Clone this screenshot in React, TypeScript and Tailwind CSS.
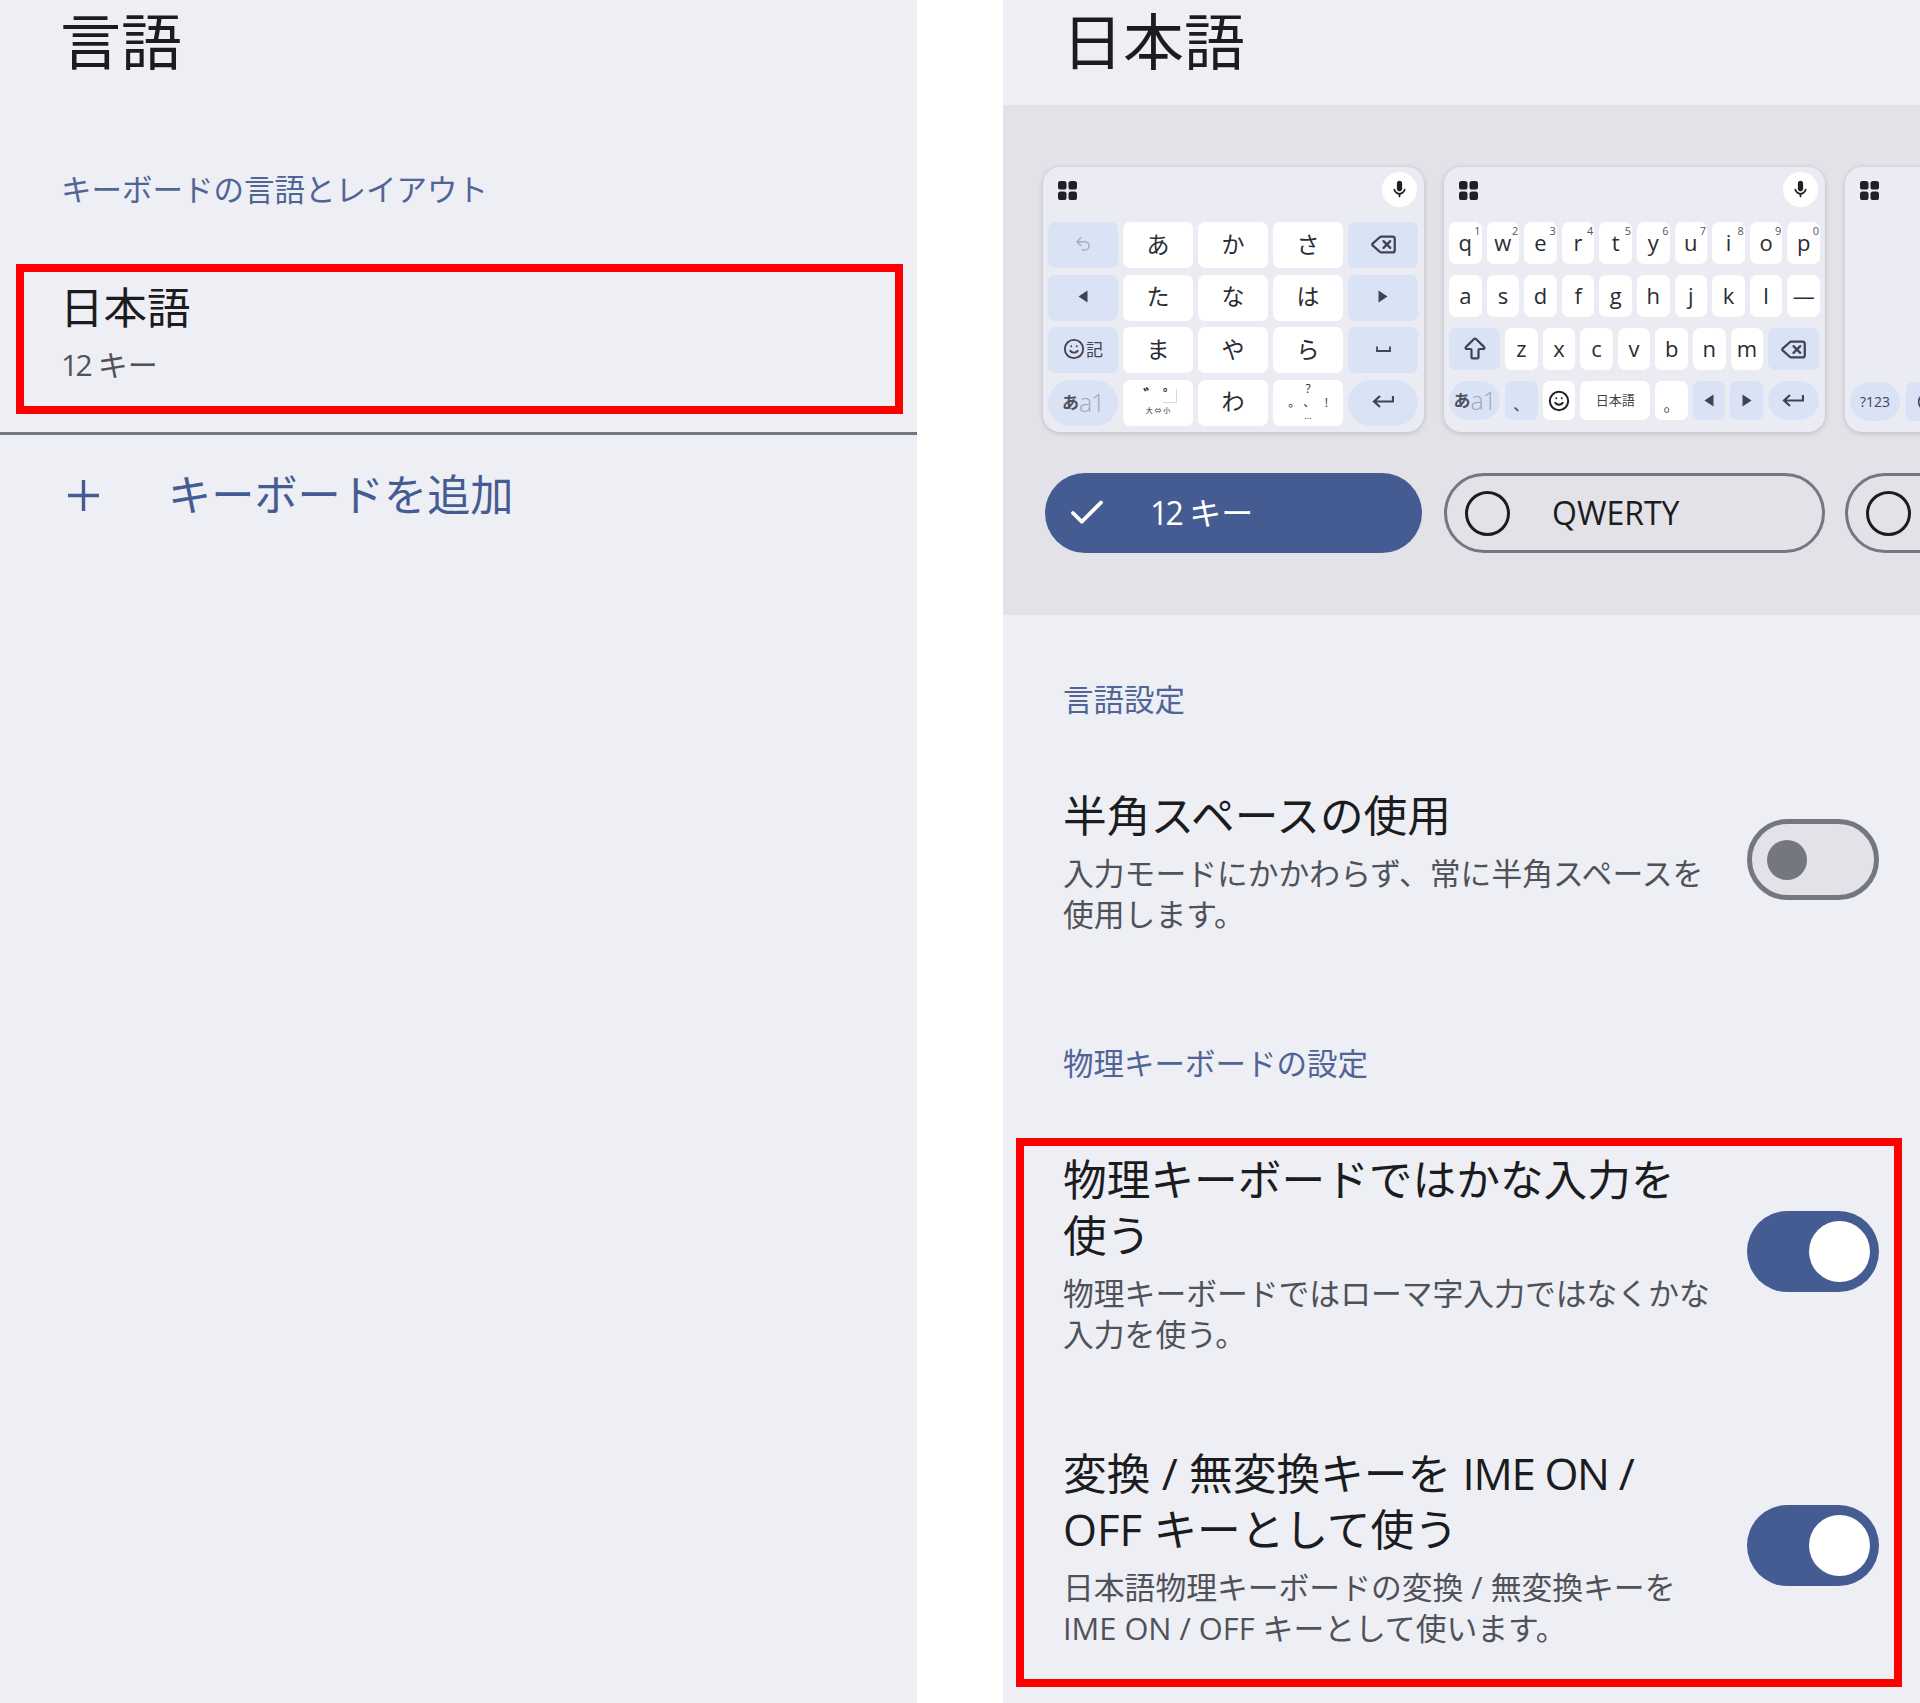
import { ArrowBigUp, Check, Delete, Smile, Undo2 } from 'lucide-react';
import type { ReactNode } from 'react';

const MIC =
  'M12 14c1.66 0 3-1.34 3-3V5c0-1.66-1.34-3-3-3S9 3.34 9 5v6c0 1.66 1.34 3 3 3zm5.91-3c-.49 0-.9.36-.98.85C16.52 14.2 14.47 16 12 16s-4.52-1.8-4.93-4.15c-.08-.49-.49-.85-.98-.85-.61 0-1.09.54-1 1.14.49 3 2.89 5.35 5.91 5.78V20c0 .55.45 1 1 1s1-.45 1-1v-2.08c3.02-.43 5.42-2.78 5.91-5.78.1-.6-.39-1.14-1-1.14z';

function GridIcon() {
  return (
    <svg width="19" height="19" viewBox="0 0 19 19" fill="#1f2126">
      <rect x="0" y="0" width="8.5" height="8.5" rx="2.6" />
      <rect x="10.5" y="0" width="8.5" height="8.5" rx="2.6" />
      <rect x="0" y="10.5" width="8.5" height="8.5" rx="2.6" />
      <rect x="10.5" y="10.5" width="8.5" height="8.5" rx="2.6" />
    </svg>
  );
}

function Triangle({ dir }: { dir: 'left' | 'right' }) {
  return (
    <svg width="10" height="13" viewBox="0 0 10 13" fill="#3f4450">
      <path d={dir === 'left' ? 'M9.5 0.5v12L0.5 6.5z' : 'M0.5 0.5v12l9-6z'} />
    </svg>
  );
}

function Enter() {
  return (
    <svg width="22" height="16" viewBox="0 0 22 16" fill="none" stroke="#3f4450" strokeWidth="2.2">
      <path d="M21 2v5.5H2.5M8 2 2 7.5 8 13" />
    </svg>
  );
}

function SpaceGlyph() {
  return (
    <svg width="15" height="7" viewBox="0 0 15 7" fill="none" stroke="#3f4450" strokeWidth="1.8">
      <path d="M1 0.5v4.5h13V0.5" />
    </svg>
  );
}

function ModeKey({ w = 'w-[70px]', h = 'h-[46px]' }: { w?: string; h?: string }) {
  return (
    <div className={`${w} ${h} flex items-center justify-center rounded-[23px] bg-[#dae2f6] leading-none`}>
      <span className="text-[17px] font-bold text-[#4d505a]">あ</span>
      <span className="text-[25px] font-light tracking-[-0.05em] text-[#a3a8b6]">a1</span>
    </div>
  );
}

function Key12({ fn, pill, children }: { fn?: boolean; pill?: boolean; children: ReactNode }) {
  return (
    <div
      className={`flex h-[46px] w-[70px] items-center justify-center pb-[2px] text-[23px] leading-none text-[#2a2c31] ${
        fn ? 'bg-[#dae2f6]' : 'bg-white'
      } ${pill ? 'rounded-[23px]' : 'rounded-[7px]'}`}
    >
      {children}
    </div>
  );
}

function LetterKey({ ch, num }: { ch: string; num?: string }) {
  return (
    <div className="relative flex h-[42px] w-[32.6px] items-center justify-center rounded-[7px] bg-white pb-[2px] text-[22px] leading-none text-[#2a2c31]">
      {ch}
      {num && <span className="absolute right-[1px] top-[3px] text-[11px] leading-none text-[#55585f]">{num}</span>}
    </div>
  );
}

function Card({ children }: { children?: ReactNode }) {
  return (
    <div className="h-[265px] w-[381px] shrink-0 rounded-[17px] bg-[#ebecf3] px-[5px] shadow-[0_1px_5px_rgba(40,44,60,0.22)]">
      {children}
    </div>
  );
}

function TopBar({ mic = true }: { mic?: boolean }) {
  return (
    <div className="mb-[14px] flex h-[41px] items-end justify-between pl-[10px] pr-[2px]">
      <div className="mb-[8px]">
        <GridIcon />
      </div>
      {mic && (
        <div className="mb-[1px] flex h-[35px] w-[35px] items-center justify-center rounded-full bg-white">
          <svg width="21" height="21" viewBox="0 0 24 24" fill="#1f2126">
            <path d={MIC} />
          </svg>
        </div>
      )}
    </div>
  );
}

function TwelveKeyCard() {
  return (
    <Card>
      <TopBar />
      <div className="flex flex-col gap-[6.5px]">
        <div className="flex gap-[5px]">
          <Key12 fn>
            <Undo2 size={18} color="#a9aebb" strokeWidth={2} />
          </Key12>
          <Key12>あ</Key12>
          <Key12>か</Key12>
          <Key12>さ</Key12>
          <Key12 fn>
            <Delete size={27} color="#3f4450" strokeWidth={2} />
          </Key12>
        </div>
        <div className="flex gap-[5px]">
          <Key12 fn>
            <Triangle dir="left" />
          </Key12>
          <Key12>た</Key12>
          <Key12>な</Key12>
          <Key12>は</Key12>
          <Key12 fn>
            <Triangle dir="right" />
          </Key12>
        </div>
        <div className="flex gap-[5px]">
          <Key12 fn>
            <Smile size={22} color="#3f4450" strokeWidth={2} />
            <span className="ml-[1px] text-[17px] text-[#3f4450]">記</span>
          </Key12>
          <Key12>ま</Key12>
          <Key12>や</Key12>
          <Key12>ら</Key12>
          <Key12 fn>
            <SpaceGlyph />
          </Key12>
        </div>
        <div className="flex gap-[5px]">
          <ModeKey />
          <Key12>
            <div className="flex flex-col items-center text-[#2a2c31]">
              <div className="flex h-[15px] items-start gap-[2px] pl-[4px]">
                <span className="text-[18px] font-bold leading-[15px]">゛</span>
                <span className="h-[14px] w-[14px] border-b border-r border-[#d8dbe3] text-[15px] font-bold leading-[12px]">
                  ゜
                </span>
              </div>
              <span className="mt-[3px] text-[7px] leading-[8px]">大 ⇔ 小</span>
            </div>
          </Key12>
          <Key12>わ</Key12>
          <Key12>
            <div className="flex flex-col items-center text-[#2a2c31]">
              <span className="text-[12px] leading-[13px]">?</span>
              <span className="whitespace-pre text-[12px] leading-[16px]">。 、   !</span>
              <span className="text-[9px] leading-[10px]">…</span>
            </div>
          </Key12>
          <Key12 fn pill>
            <Enter />
          </Key12>
        </div>
      </div>
    </Card>
  );
}

const ROW1 = [
  ['q', '1'],
  ['w', '2'],
  ['e', '3'],
  ['r', '4'],
  ['t', '5'],
  ['y', '6'],
  ['u', '7'],
  ['i', '8'],
  ['o', '9'],
  ['p', '0'],
];

function FnKey({ w, children, white }: { w: string; children: ReactNode; white?: boolean }) {
  return (
    <div
      className={`${w} flex h-[39px] items-center justify-center rounded-[7px] text-[#3f4450] ${
        white ? 'bg-white' : 'bg-[#dae2f6]'
      }`}
    >
      {children}
    </div>
  );
}

function QwertyCard() {
  return (
    <Card>
      <TopBar />
      <div className="flex flex-col gap-[11px]">
        <div className="flex gap-[5px]">
          {ROW1.map(([c, n]) => (
            <LetterKey key={c} ch={c} num={n} />
          ))}
        </div>
        <div className="flex gap-[5px]">
          {['a', 's', 'd', 'f', 'g', 'h', 'j', 'k', 'l', '—'].map((c) => (
            <LetterKey key={c} ch={c} />
          ))}
        </div>
        <div className="flex gap-[5px]">
          <div className="flex h-[42px] w-[51px] items-center justify-center rounded-[7px] bg-[#dae2f6]">
            <ArrowBigUp size={28} color="#3f4450" strokeWidth={1.9} />
          </div>
          {['z', 'x', 'c', 'v', 'b', 'n', 'm'].map((c) => (
            <LetterKey key={c} ch={c} />
          ))}
          <div className="flex h-[42px] w-[51px] items-center justify-center rounded-[7px] bg-[#dae2f6]">
            <Delete size={27} color="#3f4450" strokeWidth={2} />
          </div>
        </div>
        <div className="flex gap-[5px]">
          <ModeKey w="w-[51px]" h="h-[39px]" />
          <FnKey w="w-[32.6px]">
            <span className="mt-[6px] text-[16px] leading-none">、</span>
          </FnKey>
          <FnKey w="w-[32.6px]" white>
            <Smile size={22} color="#1f2126" strokeWidth={2.2} />
          </FnKey>
          <FnKey w="w-[70px]" white>
            <span className="text-[13px]">日本語</span>
          </FnKey>
          <FnKey w="w-[32.6px]" white>
            <span className="mt-[8px] text-[16px] leading-none">。</span>
          </FnKey>
          <FnKey w="w-[32.6px]">
            <Triangle dir="left" />
          </FnKey>
          <FnKey w="w-[32.6px]">
            <Triangle dir="right" />
          </FnKey>
          <div className="flex h-[39px] w-[51px] items-center justify-center rounded-[20px] bg-[#dae2f6]">
            <Enter />
          </div>
        </div>
      </div>
    </Card>
  );
}

function ThirdCard() {
  return (
    <Card>
      <TopBar mic={false} />
      <div className="mt-[174px] flex gap-[6px]">
        <div className="flex h-[39px] w-[50px] items-center justify-center rounded-[20px] bg-[#dae2f6] text-[14px] text-[#3f4450]">
          ?123
        </div>
        <div className="flex h-[39px] w-[42px] shrink-0 items-center justify-center rounded-[7px] bg-[#dae2f6]">
          <Smile size={20} color="#3f4450" />
        </div>
      </div>
    </Card>
  );
}

function Toggle({ on }: { on: boolean }) {
  if (on) {
    return (
      <div className="-mt-[4px] flex h-[81px] w-[132px] shrink-0 items-center justify-end rounded-full bg-[#455c92] pr-[9px]">
        <div className="h-[61px] w-[61px] rounded-full bg-white" />
      </div>
    );
  }
  return (
    <div className="-mt-[3px] flex h-[81px] w-[132px] shrink-0 items-center rounded-full border-[5px] border-[#74777f] bg-[#e2e2e8] pl-[15px]">
      <div className="h-[40px] w-[40px] rounded-full bg-[#74777f]" />
    </div>
  );
}

function SettingRow({
  title,
  desc,
  on,
  className,
}: {
  title: ReactNode;
  desc: ReactNode;
  on: boolean;
  className?: string;
}) {
  return (
    <div className={`flex items-center justify-between ${className ?? ''}`}>
      <div>
        <div className="text-[43.7px] leading-[56px] text-[#1b1c20]">{title}</div>
        <div className="mt-[10px] text-[30.8px] leading-[41px] text-[#505259]">{desc}</div>
      </div>
      <Toggle on={on} />
    </div>
  );
}

export default function App() {
  return (
    <div className="flex h-[1703px] w-[1920px] overflow-hidden bg-white font-['Open_Sans','Noto_Sans_CJK_JP',sans-serif]">
      {/* left screen */}
      <div className="h-full w-[917px] shrink-0 bg-[#eeeef5]">
        <div className="h-[86px] pl-[60px] text-[61px] leading-[84px] text-[#1b1c20]">言語</div>
        <div className="mt-[83px] pl-[61px] text-[30.5px] leading-[40px] text-[#4f6596]">
          キーボードの言語とレイアウト
        </div>
        <div className="ml-[16px] mt-[55px] h-[150px] w-[887px] border-8 border-[#fe0000] pl-[36px] pt-[8px]">
          <div className="text-[43.5px] leading-[56px] text-[#1b1c20]">日本語</div>
          <div className="mt-[9px] pl-[1px] text-[30px] leading-[40px] text-[#505259]">
            <span className="tracking-[-0.09em]">12</span> キー
          </div>
        </div>
        <div className="mt-[18px] h-[3px] w-full bg-[#74777f]" />
        <div className="mt-[27px] flex h-[66px] items-center text-[43.2px] text-[#455c92]">
          <div className="ml-[68px] w-[100px]">
            <svg width="31" height="31" viewBox="0 0 31 31" fill="none" stroke="#455c92" strokeWidth="3.4">
              <path d="M15.5 0v31M0 15.5h31" />
            </svg>
          </div>
          キーボードを追加
        </div>
      </div>

      {/* right screen */}
      <div className="ml-[86px] h-full w-[917px] shrink-0 overflow-hidden bg-[#eeeef5]">
        <div className="h-[105px] pl-[59px] text-[61px] leading-[84px] text-[#1b1c20]">日本語</div>
        <div className="h-[510px] overflow-hidden bg-[#e2e2e8] pl-[40px] pt-[62px]">
          <div className="flex gap-5">
            <TwelveKeyCard />
            <QwertyCard />
            <ThirdCard />
          </div>
          <div className="mt-[41px] flex gap-5">
            <div className="mx-[2px] flex h-[80px] w-[377px] shrink-0 items-center rounded-full bg-[#455c92] pl-[21px] text-[32px] text-white">
              <Check size={42} color="white" strokeWidth={2.2} />
              <span className="ml-[42px]">
                <span className="tracking-[-0.09em]">12</span> キー
              </span>
            </div>
            <div className="flex h-[80px] w-[381px] shrink-0 items-center rounded-full border-[3px] border-[#74777f] pl-[18px] text-[32px] text-[#1b1c20]">
              <div className="h-[45px] w-[45px] rounded-full border-[3px] border-[#1b1c20]" />
              <span className="ml-[42px]">QWERTY</span>
            </div>
            <div className="flex h-[80px] w-[381px] shrink-0 items-center rounded-full border-[3px] border-[#74777f] pl-[18px]">
              <div className="h-[45px] w-[45px] rounded-full border-[3px] border-[#1b1c20]" />
            </div>
          </div>
        </div>

        <div className="mt-[64px] pl-[60px] text-[30.5px] leading-[40px] text-[#4f6596]">言語設定</div>
        <SettingRow
          className="mt-[68px] pl-[60px] pr-[41px]"
          title="半角スペースの使用"
          desc={
            <>
              入力モードにかかわらず、常に半角スペースを
              <br />
              使用します。
            </>
          }
          on={false}
        />
        <div className="mt-[108px] pl-[60px] text-[30.5px] leading-[40px] text-[#4f6596]">物理キーボードの設定</div>
        <div className="ml-[13px] mt-[55px] h-[549px] w-[886px] border-8 border-[#fe0000] pl-[39px] pr-[15px] pt-[5px]">
          <SettingRow
            title={
              <>
                物理キーボードではかな入力を
                <br />
                使う
              </>
            }
            desc={
              <>
                物理キーボードではローマ字入力ではなくかな
                <br />
                入力を使う。
              </>
            }
            on
          />
          <SettingRow
            className="mt-[90px]"
            title={
              <>
                変換 / 無変換キーを <span className="tracking-[-0.03em]">IME ON /</span>
                <br />
                OFF キーとして使う
              </>
            }
            desc={
              <>
                日本語物理キーボードの変換 / 無変換キーを
                <br />
                IME ON / OFF キーとして使います。
              </>
            }
            on
          />
        </div>
      </div>
    </div>
  );
}
